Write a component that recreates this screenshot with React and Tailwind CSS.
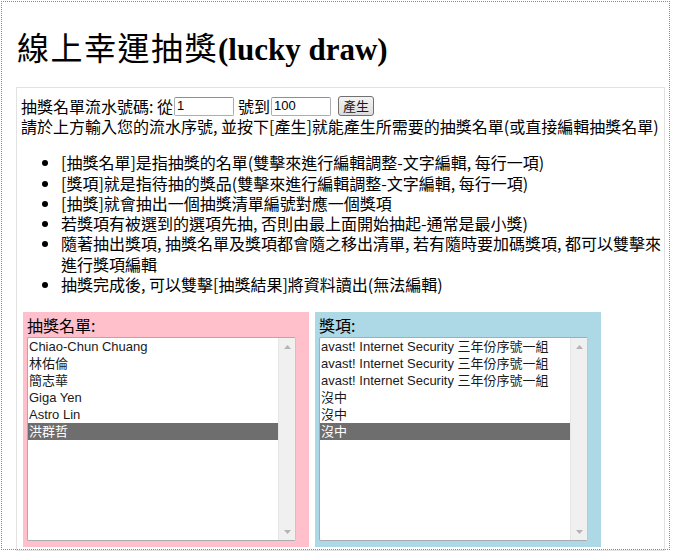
import React from "react";

const names = ["Chiao-Chun Chuang", "林佑倫", "簡志華", "Giga Yen", "Astro Lin", "洪群哲"];
const prizes = [
  "avast! Internet Security 三年份序號一組",
  "avast! Internet Security 三年份序號一組",
  "avast! Internet Security 三年份序號一組",
  "沒中",
  "沒中",
  "沒中",
];

const tips = [
  "[抽獎名單]是指抽獎的名單(雙擊來進行編輯調整-文字編輯, 每行一項)",
  "[獎項]就是指待抽的獎品(雙擊來進行編輯調整-文字編輯, 每行一項)",
  "[抽獎]就會抽出一個抽獎清單編號對應一個獎項",
  "若獎項有被選到的選項先抽, 否則由最上面開始抽起-通常是最小獎)",
  "隨著抽出獎項, 抽獎名單及獎項都會隨之移出清單, 若有隨時要加碼獎項, 都可以雙擊來進行獎項編輯",
  "抽獎完成後, 可以雙擊[抽獎結果]將資料讀出(無法編輯)",
];

function ListBox({ items, selected }) {
  return (
    <div className="flex w-[269px] h-[204px] border border-[#a9abb0] border-r-[#c4c6ca] rounded-[2px] bg-white overflow-hidden">
      <div className="flex-1 font-['Liberation_Sans','Noto_Sans_CJK_TC',sans-serif] text-[13px] leading-[17px] text-[#1a1a1a]">
        {items.map((item, idx) => (
          <div
            key={idx}
            className={`h-[17px] pl-[1px] whitespace-nowrap ${
              idx === selected ? "bg-[#6e6e6e] text-white" : ""
            }`}
          >
            {item}
          </div>
        ))}
      </div>
      {/* disabled scrollbar */}
      <div className="w-[17px] flex flex-col justify-between bg-[#f0f0f0] border-l border-[#e6e6e6]">
        <div className="h-[17px] flex items-center justify-center">
          <svg width="7" height="4" viewBox="0 0 7 4">
            <path d="M0 4 L3.5 0 L7 4 Z" fill="#b4b4b4" />
          </svg>
        </div>
        <div className="h-[17px] flex items-center justify-center">
          <svg width="7" height="4" viewBox="0 0 7 4">
            <path d="M0 0 L7 0 L3.5 4 Z" fill="#b4b4b4" />
          </svg>
        </div>
      </div>
    </div>
  );
}

export default function App() {
  return (
    <div className="w-[673px] h-[557px] bg-white pt-px pl-px overflow-hidden text-black">
      <div className="w-[669px] h-[549px] border border-dotted border-[#8a8a8a]">
        <h1 className="ml-[15px] mt-[29px] text-[32px] leading-[36px] whitespace-nowrap font-['Liberation_Serif','Noto_Sans_CJK_TC',serif]">
          <span className="tracking-[1.5px] font-normal">線上幸運抽獎</span>
          <span className="font-bold text-[31px]">(lucky draw)</span>
        </h1>

        <div className="ml-[14px] mt-[19px] w-[649px] h-[464px] border border-[#e2e2e2] pl-[4px] pt-[8px] font-['Noto_Sans_CJK_TC','Liberation_Sans',sans-serif] text-[16px]">
          <div className="flex items-center h-[20px] leading-[20px] whitespace-nowrap">
            <span>抽獎名單流水號碼: 從</span>
            <input
              defaultValue="1"
              className="ml-[1px] w-[60px] h-[19px] px-[2px] border border-[#abadb3] border-t-[#8e9096] rounded-[2px] font-['Liberation_Sans',sans-serif] text-[13px] outline-none"
            />
            <span className="ml-[4px]">號到</span>
            <input
              defaultValue="100"
              className="ml-[1px] w-[60px] h-[19px] px-[2px] border border-[#abadb3] border-t-[#8e9096] rounded-[2px] font-['Liberation_Sans',sans-serif] text-[13px] outline-none"
            />
            <button className="ml-[7px] w-[36px] h-[20px] border border-[#707070] rounded-[3px] bg-gradient-to-b from-[#f4f4f4] to-[#dcdcdc] text-[13px] leading-[18px] text-[#1a1a1a]">
              產生
            </button>
          </div>
          <p className="leading-[20.3px] whitespace-nowrap">
            請於上方輸入您的流水序號, 並按下[產生]就能產生所需要的抽獎名單(或直接編輯抽獎名單)
          </p>

          <ul className="list-disc mt-[16px] mb-[18px] pl-[40px] pr-0 leading-[20.3px]">
            {tips.map((t, i) => (
              <li key={i}>{t}</li>
            ))}
          </ul>

          <div className="flex gap-[6px] ml-[2px]">
            <div className="w-[286px] h-[235px] bg-[#ffc0cb] pl-[4px] pt-[3px]">
              <div className="h-[21px] leading-[21px] mb-[1px]">抽獎名單:</div>
              <ListBox items={names} selected={5} />
            </div>
            <div className="w-[286px] h-[235px] bg-[#add8e6] pl-[4px] pt-[3px]">
              <div className="h-[21px] leading-[21px] mb-[1px]">獎項:</div>
              <ListBox items={prizes} selected={5} />
            </div>
          </div>
        </div>
      </div>
    </div>
  );
}
